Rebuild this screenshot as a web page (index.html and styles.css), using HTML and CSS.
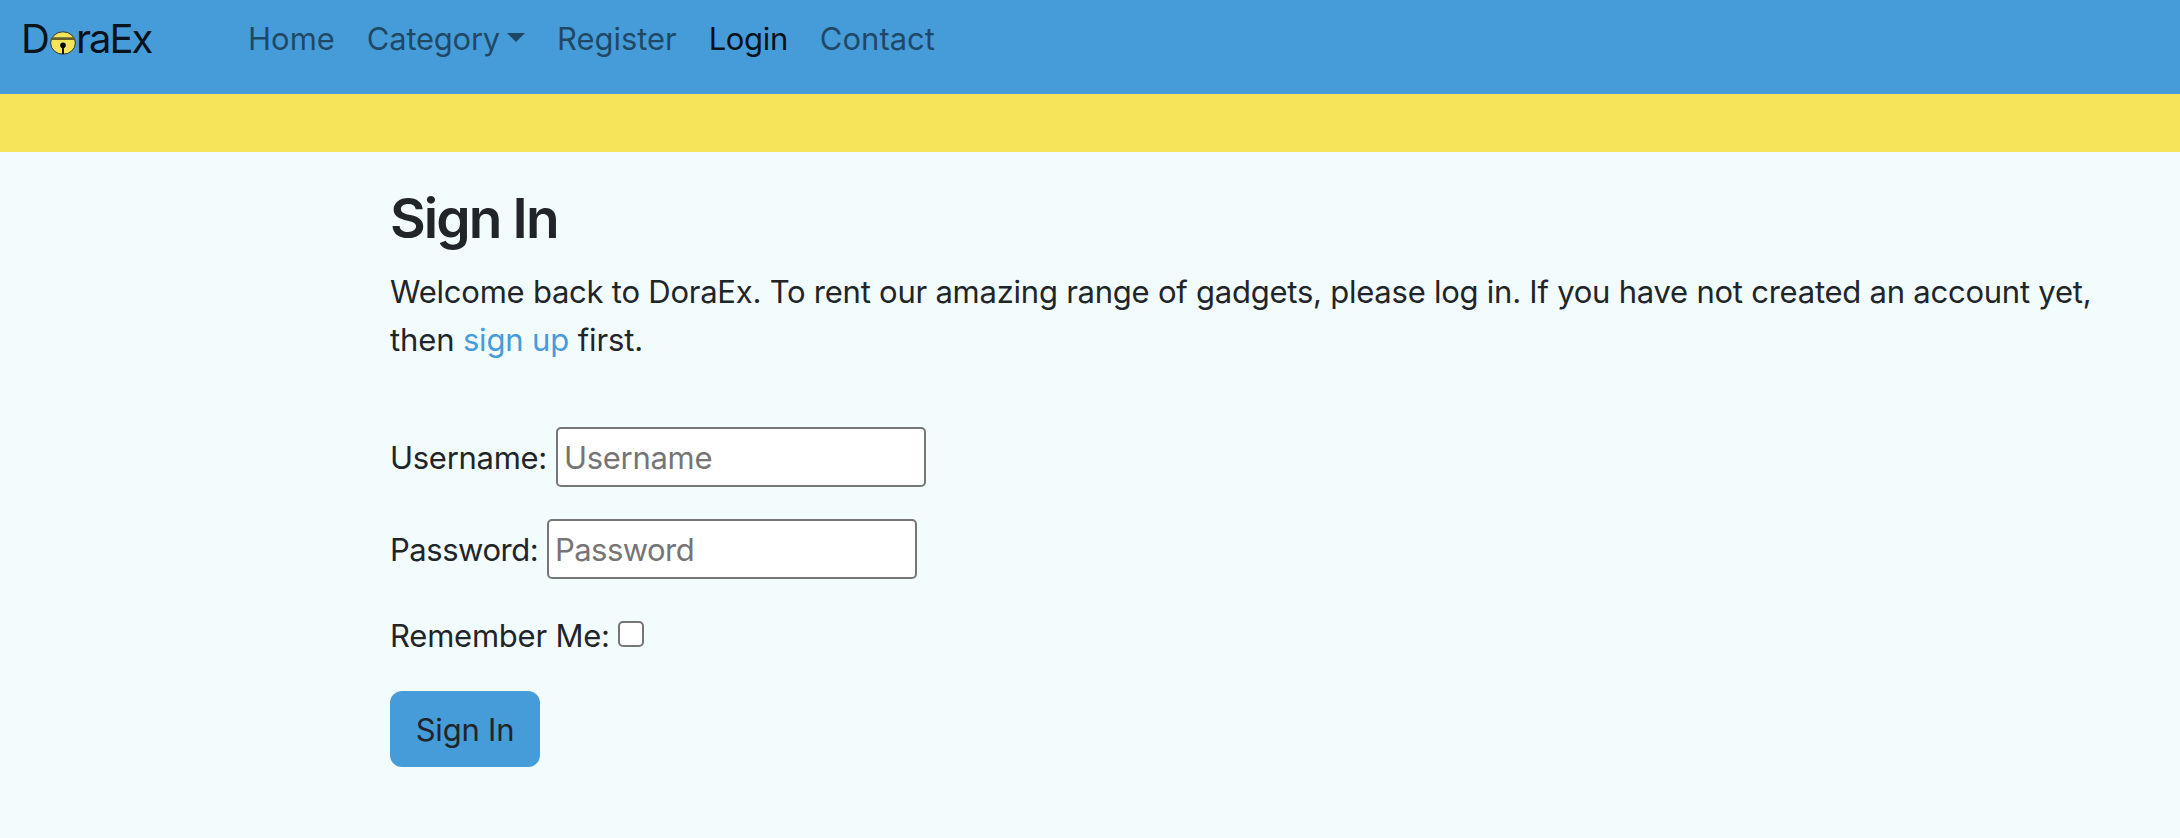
FILE: index.html
```html
<!DOCTYPE html>
<html lang="en">
<head>
<meta charset="utf-8">
<title>DoraEx - Sign In</title>
<link rel="stylesheet" href="styles.css">
</head>
<body>
<header class="navbar">
  <a class="brand" href="#"><span class="brand-d">D</span><svg class="bell" width="26" height="24" viewBox="0 0 26 24"><ellipse cx="13" cy="12" rx="12.4" ry="11.2" fill="#f6e45a" stroke="#2b3336"/><path d="M2 6.3H24L25.3 9H.7Z" fill="#665f2d"/><circle cx="13" cy="14.2" r="2.8"/><path d="M13 14v9" stroke="#000" stroke-width="1.8"/></svg><span class="brand-rest">raEx</span></a>
  <nav class="links">
    <a class="link home" href="#">Home</a>
    <a class="link category" href="#"><span>Category</span><span class="caret"></span></a>
    <a class="link register" href="#">Register</a>
    <a class="link login active" href="#">Login</a>
    <a class="link contact" href="#">Contact</a>
  </nav>
</header>
<div class="stripe"></div>
<main class="content">
  <h1 class="title">Sign In</h1>
  <p class="intro"><span class="line1">Welcome back to DoraEx. To rent our amazing range of gadgets, please log in. If you have not created an account yet,</span><br>then <a class="signup" href="#">sign up</a> first.</p>
  <form class="form">
    <div class="field"><label class="user-label" for="u">Username:</label><input class="input user" id="u" type="text" placeholder="Username"></div>
    <div class="field"><label class="pass-label" for="p">Password:</label><input class="input pass" id="p" type="password" placeholder="Password"></div>
    <div class="remember"><label class="rem-label" for="r">Remember Me:</label><input class="check" id="r" type="checkbox"></div>
    <button class="submit" type="button">Sign In</button>
  </form>
</main>
</body>
</html>
```
FILE: styles.css
```css
* { box-sizing: border-box; }
body {
  margin: 0;
  background: #f3fcfd;
  color: #212529;
  font: 31px/48px Inter, "Liberation Sans", sans-serif;
}
a { color: inherit; text-decoration: none; }
.navbar {
  display: flex;
  height: 94px;
  padding: 15px 0 0 21px;
  background: #469bd9;
}
.brand {
  display: flex;
  width: 211px;
  height: 48px;
  color: rgba(0, 0, 0, .9);
  font-size: 40px;
}
.brand-d { width: 29px; letter-spacing: -.9px; }
.brand-rest { letter-spacing: -2px; }
.bell { margin-top: 16px; }
.links { display: flex; }
.link { display: flex; height: 48px; padding: 0 16px; color: rgba(0, 0, 0, .55); }
.active { color: rgba(0, 0, 0, .9); }
.category { letter-spacing: -.25px; }
.register { letter-spacing: -.05px; }
.login { letter-spacing: -.35px; }
.caret {
  width: 18px;
  height: 9px;
  margin: 18px 0 0 7px;
  border: 9px solid transparent;
  border-top: 9px solid;
  border-bottom: 0;
}
.stripe { height: 58px; background: #f6e45a; }
.content { padding: 32px 0 0 390px; }
.title {
  margin: 0 0 16px;
  font-size: 55px;
  line-height: 68px;
  font-weight: 600;
  letter-spacing: -1.9px;
}
.intro { height: 96px; margin: 0; white-space: nowrap; letter-spacing: -.14px; }
.line1 { letter-spacing: -.237px; }
.signup { color: #469bd9; }
.form { padding-top: 63px; }
.field { display: flex; align-items: center; height: 60px; margin-bottom: 32px; }
.user-label { width: 166px; padding-top: 1px; letter-spacing: -.28px; }
.pass-label { width: 157px; padding-top: 1px; letter-spacing: -.47px; }
.input {
  width: 370px;
  height: 60px;
  padding: 2px 6px;
  border: 2px solid #767676;
  border-radius: 5px;
  background: #fff;
  font: inherit;
}
.input::placeholder { color: #757575; }
.user { letter-spacing: -.3px; }
.pass { letter-spacing: -.55px; }
.remember { display: flex; height: 48px; margin-bottom: 32px; }
.rem-label { width: 228px; padding-top: 1px; letter-spacing: -.22px; }
.check {
  appearance: none;
  width: 26px;
  height: 26px;
  margin: 10px 0 0;
  border: 2px solid #767676;
  border-radius: 5px;
  background: #fff;
}
.submit {
  width: 150px;
  height: 76px;
  padding: 1px 0 0;
  border: 0;
  border-radius: 12px;
  background: #469bd9;
  color: #212529;
  font: inherit;
  letter-spacing: -.2px;
}
```
